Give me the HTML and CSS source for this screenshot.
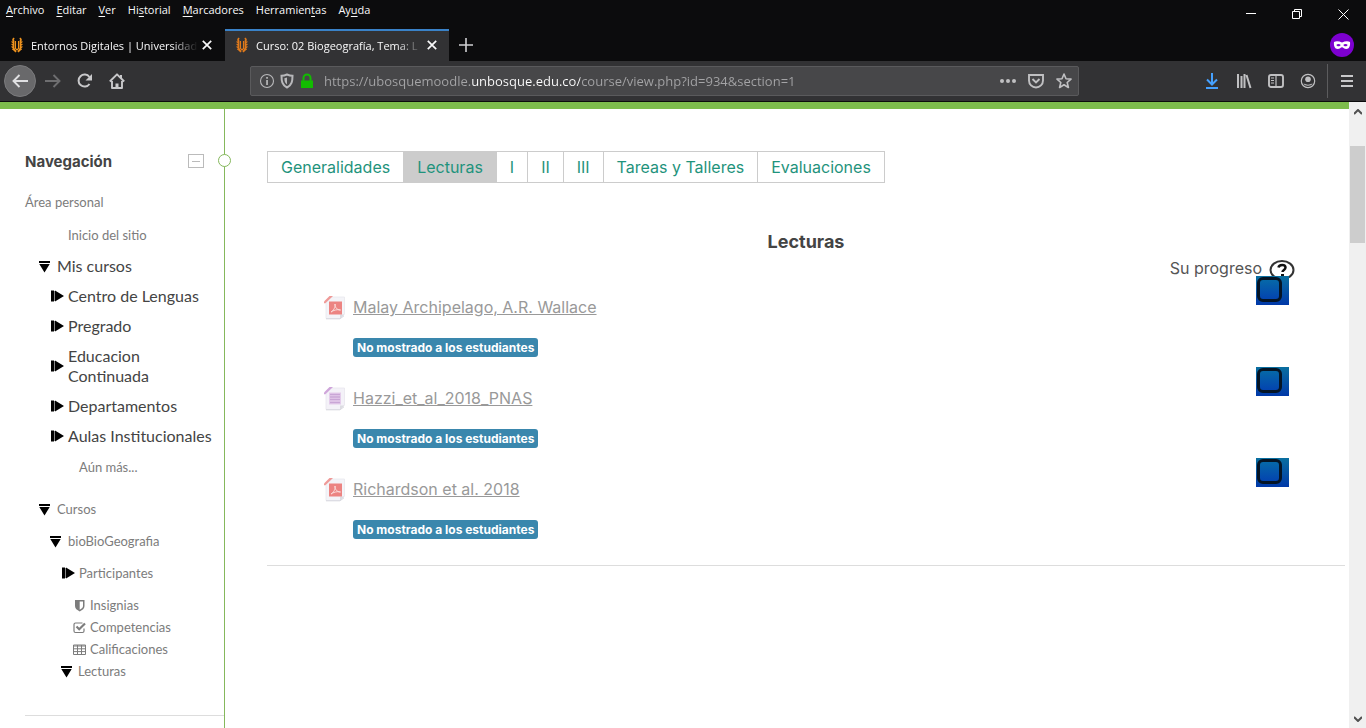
FILE: index.html
```html
<!DOCTYPE html>
<html lang="es">
<head>
<meta charset="utf-8">
<title>Curso: 02 Biogeografía, Tema: Lecturas</title>
<link rel="stylesheet" href="styles.css">
</head>
<body>
<svg class="defs" aria-hidden="true">
  <symbol id="logo" viewBox="0 0 12 16">
    <g fill="none" stroke="currentColor">
      <path d="M3.300 1.200Q1.200 2.200 2.600 4v7Q3 13.500 5.200 14.800M8.700 1.200Q10.800 2.200 9.400 4v7Q9 13.500 6.800 14.800" stroke-width="1.700"/>
      <path d="M.6 4.500 2.600 6M.6 7l2 1.500M.6 9.500l2 1.500M1.200 12l2 1M11.400 4.500l-2 1.500M11.400 7l-2 1.500M11.400 9.500l-2 1.500M10.800 12l-2 1" stroke-width="1.200"/>
      <path d="M4.500 4v7.500L6 13M7.500 4v7.500L6 13" stroke-width="1.100"/>
    </g>
  </symbol>
  <symbol id="close" viewBox="0 0 10 10"><path d="M.8.8l8.400 8.400M9.200.8.800 9.200" stroke="currentColor" stroke-width="1.700" fill="none"/></symbol>
  <symbol id="closed" viewBox="0 0 13 12"><path d="M0 .5h3v11H0zM4 .5 13 6 4 11.500z"/><path d="M3 1h1v10H3z" fill="#888"/></symbol>
  <symbol id="open" viewBox="0 0 11 12"><path d="M0 0h11v2H0zM.3 3h10.400L5.500 11.500z"/></symbol>
  <symbol id="pdf" viewBox="0 0 22 24">
    <path d="M7 1h13.500v17l-4.500 4.500H2V7z" fill="#f4f4f8" stroke="#e8e8ee" stroke-width=".8"/>
    <path d="M2 22.800h14l4-3" stroke="#d8d8de" fill="none"/>
    <path d="M16 22.500v-4h4.500z" fill="#dcdce2"/>
    <path d="M0 7V5.500L5.500 0H9L1 7.500z" fill="#ef9a98"/>
    <path d="M5 5.500h13v13H5z" fill="#ec8482"/>
    <path d="M7 16c2-1 5-5 4-8-.5 3 2 6 5.500 6C13 13 9 14.500 7 16z" fill="none" stroke="#fbdcdb"/>
  </symbol>
  <symbol id="doc" viewBox="0 0 22 24">
    <path d="M7 1h13.500v17l-4.500 4.500H2V7z" fill="#f4f2f8" stroke="#e8e6ee" stroke-width=".8"/>
    <path d="M2 22.800h14l4-3" stroke="#d8d8de" fill="none"/>
    <path d="M16 22.500v-4h4.500z" fill="#dcdce2"/>
    <path d="M0 7V5.500L5.500 0H9L1 7.500z" fill="#cfa5da"/>
    <path d="M5 5.500h12v12H5z" fill="#e4cdeb"/>
    <path d="M6 7.500h10M6 10h10M6 12.500h10M6 15.500h10" stroke="#c9a6d6" stroke-width="1.400"/>
  </symbol>
</svg>

<header class="browser">
  <nav class="menubar" aria-label="Menú">
    <button><u>A</u>rchivo</button><button><u>E</u>ditar</button><button><u>V</u>er</button><button>Hi<u>s</u>torial</button><button><u>M</u>arcadores</button><button>Herramien<u>t</u>as</button><button>Ay<u>u</u>da</button>
    <div class="window-controls">
      <button aria-label="Minimizar"><svg width="10" height="10"><path d="M0 4.500h10" stroke="#fff"/></svg></button>
      <button aria-label="Restaurar"><svg width="10" height="10"><path d="M.5 2.500h7v7h-7zM2.500 2.500v-2h7v7h-2" stroke="#fff" fill="none"/></svg></button>
      <button aria-label="Cerrar"><svg width="11" height="11"><path d="M.5.500l10 10M10.500.500l-10 10" stroke="#fff"/></svg></button>
    </div>
  </nav>
  <div class="tabs">
    <div class="tab"><svg class="favicon first"><use href="#logo"/></svg><span class="tab-title">Entornos Digitales | Universidad</span><button aria-label="Cerrar pestaña"><svg class="x"><use href="#close"/></svg></button></div>
    <div class="tab active"><svg class="favicon"><use href="#logo"/></svg><span class="tab-title">Curso: 02 Biogeografía, Tema: L</span><button aria-label="Cerrar pestaña"><svg class="x"><use href="#close"/></svg></button></div>
    <button class="new-tab" aria-label="Nueva pestaña"><svg width="14" height="14"><path d="M7 0v14M0 7h14" stroke="#d0d0d2" stroke-width="1.600"/></svg></button>
    <svg class="private" viewBox="0 0 24 24"><circle cx="12" cy="12" r="12" fill="#7d00d0"/><path fill="#fff" fill-rule="evenodd" d="M4 9c2-1.200 5-1 8 .6 3-1.600 6-1.800 8-.6.500 3.500-.7 7-3.700 7-2.100 0-3-1.800-4.300-1.800S9.800 16 7.700 16C4.700 16 3.500 12.500 4 9zm2.300 3c1 1.800 3.400 1.800 4.400 0-1-1.500-3.400-1.500-4.400 0zm7 0c1 1.800 3.400 1.800 4.400 0-1-1.500-3.400-1.500-4.400 0z"/></svg>
  </div>
  <div class="toolbar">
    <div class="nav-buttons">
      <button class="back" aria-label="Atrás"><svg width="16" height="14"><path d="M16 7H1.500M7.500 1l-6 6 6 6" fill="none" stroke="#e0e0e2" stroke-width="1.900"/></svg></button>
      <button aria-label="Adelante"><svg width="16" height="14"><path d="M0 7h14.500M8.500 1l6 6-6 6" fill="none" stroke="#6e6e70" stroke-width="1.900"/></svg></button>
      <button aria-label="Recargar"><svg width="16" height="16" viewBox="0 0 16 16"><path d="M12.500 11A6 6 0 1 1 12.400 4" fill="none" stroke="#c8c8ca" stroke-width="2"/><path d="M15 1v6.500H8.500z" fill="#c8c8ca"/></svg></button>
      <button aria-label="Inicio"><svg width="16" height="16" viewBox="0 0 16 16"><path d="M.8 8.500 8 1.300l7.200 7.200M3 8v7h10V8" fill="none" stroke="#c8c8ca" stroke-width="1.900" stroke-linejoin="round"/><path d="M6.500 15v-4.500h3V15M11 2h2v3h-2z" fill="#c8c8ca"/></svg></button>
    </div>
    <div class="address">
      <svg width="16" height="16" viewBox="0 0 16 16"><circle cx="8" cy="8" r="6.500" fill="none" stroke="#b8b8ba" stroke-width="1.100"/><path d="M7.200 4h1.700v1.700H7.200zM7.200 7h1.700v5H7.200z" fill="#b8b8ba"/></svg>
      <svg width="16" height="16" viewBox="0 0 16 16"><path d="M8 1.500c2 .9 3.700 1.300 5.500 1.300 0 5.200-.5 9.200-5.500 11.700-5-2.500-5.500-6.500-5.500-11.700C4.300 2.800 6 2.400 8 1.500z" fill="none" stroke="#b8b8ba" stroke-width="2"/><path d="M8 4.500v7c-2-1.500-2.600-3.500-2.600-6.300z" fill="#b8b8ba"/></svg>
      <svg width="16" height="16" viewBox="0 0 16 16"><path d="M2 7.500h12V15H2z" fill="#12bc00"/><path d="M4.500 8V5a3.500 3.500 0 0 1 7 0v3" fill="none" stroke="#12bc00" stroke-width="2"/></svg>
      <input class="url" type="text" aria-label="Dirección" value="https://ubosquemoodle.unbosque.edu.co/course/view.php?id=934&amp;section=1">
      <div class="page-actions">
        <button aria-label="Acciones"><svg width="16" height="16" fill="#c0c0c2"><circle cx="2" cy="8" r="2"/><circle cx="8" cy="8" r="2"/><circle cx="14" cy="8" r="2"/></svg></button>
        <button aria-label="Pocket"><svg width="16" height="16" fill="none" stroke="#c0c0c2" stroke-width="1.900"><path d="M1 2h14v5.500a7 7 0 0 1-14 0zM4.500 6 8 9.500 11.500 6"/></svg></button>
        <button aria-label="Marcar"><svg width="16" height="16" fill="none" stroke="#c0c0c2" stroke-width="1.600"><path d="m8 1 2 4.700 5 .4-3.800 3.400 1.200 5L8 11.800l-4.400 2.700 1.200-5L1 6.100l5-.4z" stroke-linejoin="round"/></svg></button>
      </div>
    </div>
    <div class="tools">
      <button aria-label="Descargas"><svg width="16" height="16" fill="none" stroke="#45a1ff" stroke-width="2"><path d="M8 0v12M3 6.500l5 5 5-5M2 15h12"/></svg></button>
      <button aria-label="Biblioteca"><svg width="16" height="16" fill="none" stroke="#c0c0c2" stroke-width="2"><path d="M2 1v14M5.500 3v12M8.500 1v14M10.500 2 14.500 15"/></svg></button>
      <button aria-label="Barra lateral"><svg width="16" height="16" fill="none" stroke="#c0c0c2" stroke-width="1.900"><rect x="1" y="2" width="14" height="12" rx="2"/><path d="M8 2v12M3 5h3M3 7.500h3M3 10h3" stroke-width="1.200"/></svg></button>
      <button aria-label="Cuenta"><svg width="16" height="16" fill="#c0c0c2"><circle cx="8" cy="8" r="6.700" fill="none" stroke="#c0c0c2" stroke-width="1.200"/><circle cx="8" cy="6.200" r="2.800"/><path d="M3.500 10.500c3 1.500 6 1.500 9 0C11.500 13.500 4.500 13.500 3.500 10.500z"/></svg></button>
      <button class="app-menu" aria-label="Menú"><svg width="12" height="12" stroke="#c8c8ca" stroke-width="2"><path d="M0 1h12M0 6h12M0 11h12"/></svg></button>
    </div>
  </div>
</header>

<div class="viewport">
  <div class="page">
    <aside class="sidebar">
      <div class="block-head"><h2>Navegación</h2><button class="collapse" aria-label="Ocultar bloque"></button><span class="knob"></span></div>
      <nav aria-label="Navegación">
        <ul class="tree">
          <li class="note"><a href="#">Área personal</a></li>
          <li class="note l-site"><a href="#">Inicio del sitio</a></li>
          <li class="l1"><svg class="down"><use href="#open"/></svg><a href="#">Mis cursos</a></li>
          <li class="l2"><svg class="right"><use href="#closed"/></svg><a href="#">Centro de Lenguas</a></li>
          <li class="l2"><svg class="right"><use href="#closed"/></svg><a href="#">Pregrado</a></li>
          <li class="l2"><svg class="right"><use href="#closed"/></svg><a href="#">Educacion Continuada</a></li>
          <li class="l2"><svg class="right"><use href="#closed"/></svg><a href="#">Departamentos</a></li>
          <li class="l2"><svg class="right"><use href="#closed"/></svg><a href="#">Aulas Institucionales</a></li>
          <li class="note l-more"><a href="#">Aún más...</a></li>
          <li class="note l1 courses"><svg class="down"><use href="#open"/></svg><a href="#">Cursos</a></li>
          <li class="note l2"><svg class="down"><use href="#open"/></svg><a href="#">bioBioGeografia</a></li>
          <li class="note l3"><svg class="right"><use href="#closed"/></svg><a href="#">Participantes</a></li>
        </ul>
        <ul class="tree leaves">
          <li><svg class="leaf" viewBox="0 0 13 13"><path fill="#7c7c7c" fill-rule="evenodd" d="M2 1h9.500v6c0 2.500-2 4-4.750 5.500C4 11 2 9.500 2 7zm4.700 1.500v8.300C9 9.500 10 8.500 10 7V2.500z"/></svg><a href="#">Insignias</a></li>
          <li><svg class="leaf" viewBox="0 0 13 13" fill="none" stroke="#7c7c7c"><path d="M11 7.500V10a1.500 1.500 0 0 1-1.500 1.500h-7A1.500 1.500 0 0 1 1 10V3.500A1.500 1.500 0 0 1 2.500 2h7" stroke-width="1.200"/><path d="m3.500 5.500 2.700 2.700L12 2.500" stroke-width="2.200"/></svg><a href="#">Competencias</a></li>
          <li><svg class="leaf" viewBox="0 0 13 13" fill="none" stroke="#7c7c7c"><path d="M.5 2h12v9.500H.5zM.5 3h12M.5 5.800h12M.5 8.600h12M4.500 2v9.500M8.500 2v9.500"/></svg><a href="#">Calificaciones</a></li>
          <li class="current"><svg class="down"><use href="#open"/></svg><a href="#">Lecturas</a></li>
        </ul>
      </nav>
      <hr>
    </aside>
    <main class="content">
      <nav class="sections" aria-label="Secciones">
        <a href="#">Generalidades</a><a href="#" class="selected">Lecturas</a><a href="#">I</a><a href="#">II</a><a href="#">III</a><a href="#">Tareas y Talleres</a><a href="#">Evaluaciones</a>
      </nav>
      <h1>Lecturas</h1>
      <div class="progress">Su progreso <svg width="26" height="20" viewBox="0 0 26 20" role="img" aria-label="Ayuda"><ellipse cx="13" cy="10" rx="11.500" ry="9" fill="#fff" stroke="#333" stroke-width="2"/><path d="M9.500 7.500C10 4 16.500 4 16.500 7.500c0 2.500-3 2.300-3 4.500" fill="none" stroke="#111" stroke-width="2.500"/><path d="M12 14h3v2.500h-3z" fill="#111"/></svg></div>
      <ul class="activities">
        <li><svg class="file"><use href="#pdf"/></svg><div><a href="#">Malay Archipelago, A.R. Wallace</a><span class="badge">No mostrado a los estudiantes</span></div><input type="checkbox" aria-label="Malay Archipelago, A.R. Wallace completada"></li>
        <li><svg class="file"><use href="#doc"/></svg><div><a href="#">Hazzi_et_al_2018_PNAS</a><span class="badge">No mostrado a los estudiantes</span></div><input type="checkbox" aria-label="Hazzi_et_al_2018_PNAS completada"></li>
        <li><svg class="file"><use href="#pdf"/></svg><div><a href="#">Richardson et al. 2018</a><span class="badge">No mostrado a los estudiantes</span></div><input type="checkbox" aria-label="Richardson et al. 2018 completada"></li>
      </ul>
      <hr>
    </main>
  </div>
  <div class="scrollbar">
    <svg width="8" height="6"><path d="m0 5 4-4 4 4" fill="none" stroke="#505050" stroke-width="2"/></svg>
    <div class="track"><div class="thumb"></div></div>
    <svg width="8" height="6"><path d="m0 1 4 4 4-4" fill="none" stroke="#505050" stroke-width="2"/></svg>
  </div>
</div>
</body>
</html>
```
FILE: styles.css
```css
*, ::before { box-sizing: border-box; }
body {
  margin: 0;
  height: 100vh;
  display: flex;
  flex-direction: column;
  overflow: hidden;
  background: #fff;
  font-family: Lato, sans-serif;
}
button { padding: 0; border: 0; background: none; color: inherit; font: inherit; }
button, a { cursor: pointer; }
ul { list-style: none; margin: 0; padding: 0; }
svg { display: block; flex: none; }
.defs { display: none; }

/* Browser window */
.browser {
  flex: none;
  background: #0c0c0d;
  color: #f9f9fa;
  font: 11px "Open Sans", "Noto Sans", sans-serif;
  border-bottom: 1px solid #0c0c0d;
}
.menubar { display: flex; gap: 12px; height: 29px; padding: 1px 0 0 6px; }
.menubar > button { height: 18px; line-height: 18px; }
.menubar u { text-underline-offset: 2px; }
.window-controls { display: flex; margin-left: auto; height: 26px; }
.window-controls button { width: 46px; display: grid; place-items: center; }
.tabs { display: flex; align-items: stretch; height: 32px; }
.tab { display: flex; align-items: center; width: 225px; padding: 0 13px 0 11px; }
.tab.active { width: 224px; background: #323234; border-top: 2px solid #3a82c8; padding: 0 12px 2px 11px; }
.favicon { width: 12px; height: 16px; color: #f0941e; }
.tab.active .favicon { color: #e07a1c; }
.tab-title {
  flex: 1;
  min-width: 0;
  margin: 0 4px 0 8px;
  white-space: nowrap;
  -webkit-mask-image: linear-gradient(to right, #000 84%, transparent);
  mask-image: linear-gradient(to right, #000 84%, transparent);
}
.x { width: 10px; height: 10px; }
.new-tab { width: 34px; display: grid; place-items: center; }
.private { width: 24px; height: 24px; margin: 4px 12px 0 auto; }
.toolbar { display: flex; align-items: center; height: 40px; background: #323234; }
.nav-buttons { display: flex; align-items: center; gap: 16px; width: 250px; padding-left: 4px; }
.back { width: 32px; height: 32px; margin-right: -7px; border-radius: 50%; background: #69696b; border: 1px solid #7b7b7d; display: grid; place-items: center; }
.address {
  display: flex;
  align-items: center;
  gap: 4px;
  flex: 0 1 829px;
  height: 30px;
  padding: 0 6px 0 8px;
  background: #474749;
  border: 1px solid #5a5a5c;
  border-radius: 2px;
}
.url {
  flex: 1;
  min-width: 0;
  margin-left: 5px;
  padding: 0;
  border: 0;
  outline: 0;
  font: 13px "Open Sans", "Noto Sans", sans-serif;
  color: transparent;
  background: linear-gradient(to right, #a4a4a6 148px, #fff 148px, #fff 256px, #a4a4a6 256px);
  -webkit-background-clip: text;
  background-clip: text;
}
.page-actions { display: flex; gap: 12px; }
.tools { display: flex; align-items: center; gap: 16px; margin-left: auto; }
.app-menu { height: 34px; width: 39px; margin-left: -5px; border-left: 1px solid #5c5c5e; display: grid; place-items: center; }

/* Page */
.viewport { flex: 1; min-height: 0; display: flex; }
.page { flex: 1; min-width: 0; display: flex; border-top: 7px solid #7dbc4c; }
.sidebar { width: 225px; flex: none; border-right: 1px solid #85b85c; padding: 36px 0 0 25px; }
.block-head { display: flex; align-items: center; height: 32px; position: relative; margin-bottom: 9px; }
h2 { margin: 0; flex: 1; font: 700 15px Inter, sans-serif; color: #444; }
.collapse { width: 16px; height: 14px; margin-right: 20px; border: 1px solid #bbb; display: grid; place-items: center; }
.collapse::before { content: ""; width: 8px; height: 1px; background: #bbb; }
.knob { position: absolute; right: -7px; top: 9px; width: 13px; height: 13px; border: 1px solid #85b85c; border-radius: 50%; background: #fff; }
.tree a { color: #444; text-decoration: none; }
.tree li { display: flex; align-items: center; font-size: 16px; line-height: 20px; padding: 5px 10px 5px 0; gap: 5px; }
.tree .note { font-size: 13px; padding: 6px 0; }
.tree .note a, .leaves a { color: #7c7c7c; }
.right { width: 13px; height: 12px; margin: 0 -1px 0 1px; }
.down { width: 11px; height: 12px; margin: 2px 2px 0 0; }
.tree .l1 { padding-left: 14px; }
.tree .l2 { padding-left: 25px; }
.tree .l3 { padding-left: 36px; }
.tree .l-site { padding-left: 43px; margin-top: 1px; }
.tree .l-more { padding-left: 54px; }
.tree .courses { margin-top: 10px; }
.leaves { padding: 5px 0 33px; }
.tree.leaves li { padding: 1px 0 1px 48px; font-size: 13px; gap: 4px; }
.tree.leaves .current { padding-left: 36px; }
.leaf { width: 13px; height: 13px; }
hr { margin: 0; border: 0; border-top: 1px solid #ddd; }

.content { flex: 1; min-width: 0; padding: 42px 4px 0 42px; font: 16px Inter, sans-serif; color: #555; }
.sections { display: flex; }
.sections a {
  height: 32px;
  padding: 0 13px;
  border: 1px solid #ccc;
  margin-right: -1px;
  line-height: 30px;
  color: #1f937c;
  text-decoration: none;
}
.sections .selected { background: #ccc; }
h1 { margin: 47px 0 0; font-size: 18px; line-height: 24px; font-weight: 700; text-align: center; color: #444; }
.progress { display: flex; justify-content: flex-end; align-items: center; gap: 7px; height: 24px; margin: 2px 50px 0 0; line-height: 20px; }
.progress svg { align-self: flex-end; }
.activities { padding: 0 56px 0 57px; margin-top: -4px; }
.activities li { display: flex; height: 91px; }
.activities li > div { flex: 1; display: flex; flex-direction: column; align-items: flex-start; gap: 21px; padding: 21px 0 0 7px; }
.activities a { color: #999; line-height: 20px; }
.file { width: 22px; height: 24px; margin-top: 20px; }
.badge { padding: 0 4px; height: 19px; border-radius: 3px; background: #3a87ad; color: #fff; font-size: 12px; font-weight: 700; line-height: 19px; }
.activities input {
  appearance: none;
  width: 33px;
  height: 29px;
  margin: 0;
  padding: 1px;
  background: linear-gradient(#0a6f9f, #0038a8);
}
.activities input::before {
  content: "";
  display: block;
  width: 25px;
  height: 25px;
  border: 3px solid #041425;
  border-radius: 6px;
  background: linear-gradient(#0668a8, #0344b0);
}
.content hr { margin-top: 16px; }
.scrollbar { width: 17px; background: #f0f0f0; display: flex; flex-direction: column; align-items: center; padding: 7px 0 6px; }
.track { flex: 1; width: 15px; padding-top: 31px; }
.thumb { height: 97px; background: #cdcdcd; }
```
